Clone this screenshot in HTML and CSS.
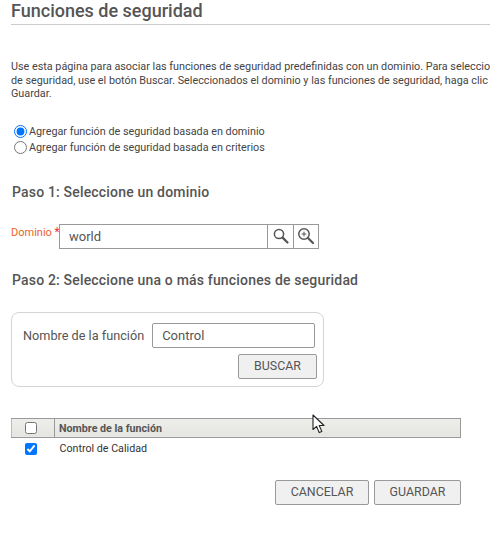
FILE: index.html
```html
<!DOCTYPE html>
<html lang="es">
<head>
  <meta charset="UTF-8" />
  <title>Funciones de seguridad</title>
  <link rel="stylesheet" href="styles.css">
</head>
<body>
  <div class="page">
    <h1>Funciones de seguridad</h1>

    <p class="intro">Use esta página para asociar las funciones de seguridad predefinidas con un dominio. Para seleccionar las funciones<br>de seguridad, use el botón Buscar. Seleccionados el dominio y las funciones de seguridad, haga clic en<br>Guardar.</p>

    <div class="radios">
      <label><input type="radio" name="tipo" checked /> Agregar función de seguridad basada en dominio</label>
      <label><input type="radio" name="tipo" /> Agregar función de seguridad basada en criterios</label>
    </div>

    <h2 class="step-one">Paso 1: Seleccione un dominio</h2>

    <div class="domain-row">
      <label class="domain-label" for="domain">Dominio <span>*</span></label>
      <input class="domain-input" type="text" id="domain" value="world" />
      <button class="icon-btn search-icon" type="button" aria-label="Buscar">
        <svg width="18" height="18" viewBox="0 0 18 18"><circle cx="7" cy="7" r="4.6" fill="none" stroke="#555" stroke-width="1.5"/><path d="M10.6 10.6 L15.5 15.5" stroke="#555" stroke-width="2.2" stroke-linecap="round"/></svg>
      </button>
      <button class="icon-btn" type="button" aria-label="Búsqueda avanzada">
        <svg width="18" height="18" viewBox="0 0 18 18"><circle cx="7" cy="7" r="5.2" fill="none" stroke="#555" stroke-width="1.5"/><path d="M4.6 7 H9.4 M7 4.6 V9.4" stroke="#555" stroke-width="1"/><path d="M11 11 L16 16" stroke="#555" stroke-width="2.2" stroke-linecap="round"/></svg>
      </button>
    </div>

    <h2 class="step-two">Paso 2: Seleccione una o más funciones de seguridad</h2>

    <form class="search-box">
      <div class="search-field">
        <label for="role">Nombre de la función</label>
        <input type="text" id="role" value="Control" />
      </div>
      <button class="btn search-btn" type="button">BUSCAR</button>
    </form>

    <table class="roles">
      <thead>
        <tr>
          <th class="check-col"><input type="checkbox" /></th>
          <th>Nombre de la función</th>
        </tr>
      </thead>
      <tbody>
        <tr>
          <td class="check-col"><input type="checkbox" checked /></td>
          <td>Control de Calidad</td>
        </tr>
      </tbody>
    </table>

    <div class="actions">
      <button class="btn cancel-btn" type="button">CANCELAR</button>
      <button class="btn save-btn" type="button">GUARDAR</button>
    </div>
  </div>

  <svg class="cursor" width="14" height="21" viewBox="0 0 14 21"><path d="M1 1 V15.5 L4.6 12.4 L7.2 18.6 L9.8 17.4 L7.2 11.5 L12 11.5 Z" fill="#fff" stroke="#222" stroke-width="1.1" stroke-linejoin="round"/></svg>
</body>
</html>
```

FILE: styles.css
```css
html, body {
  margin: 0;
  padding: 0;
  height: 541px;
  overflow: hidden;
  background: white;
}

body {
  font-family: Roboto, sans-serif;
  color: #555;
  position: relative;
}

.page {
  width: 479px;
  padding: 0 0 0 11px;
  overflow: hidden;
}

h1 {
  margin: 0;
  height: 24px;
  font-size: 18px;
  line-height: 21px;
  font-weight: 500;
  color: #555;
  border-bottom: 1px solid #ccc;
}

.intro {
  margin: 35px 0 0;
  font-size: 10.8px;
  line-height: 13.5px;
  white-space: nowrap;
  overflow: hidden;
  color: #444;
}

.radios {
  margin: 24px 0 0 3px;
  display: flex;
  flex-direction: column;
  gap: 3px;
  font-size: 10.8px;
  color: #444;
}

.radios label {
  display: flex;
  align-items: center;
  gap: 2px;
  height: 13px;
}

.radios input {
  margin: 0;
  width: 13px;
  height: 13px;
}

h2 {
  margin: 0 0 0 1px;
  font-size: 14px;
  line-height: 16px;
  font-weight: 500;
  letter-spacing: 0.18px;
  color: #555;
}

.step-one {
  margin-top: 30px;
}

.domain-row {
  margin-top: 24px;
  display: flex;
  align-items: center;
}

.domain-label {
  width: 48px;
  font-size: 11px;
  white-space: nowrap;
  color: #e8642c;
  position: relative;
  top: -4px;
}

.domain-label span {
  color: #e33;
  font-size: 12px;
}

.domain-input {
  width: 209px;
  height: 25px;
  box-sizing: border-box;
  border: 1px solid #999;
  padding: 0 9px;
  font: 13px Roboto, sans-serif;
  color: #555;
  outline: none;
}

.icon-btn {
  width: 26px;
  height: 25px;
  box-sizing: border-box;
  padding: 0;
  margin-left: -1px;
  border: 1px solid #999;
  background: white;
  display: flex;
  align-items: center;
  justify-content: center;
}

.search-icon {
  width: 27px;
}

.step-two {
  margin-top: 23px;
}

.search-box {
  margin-top: 24px;
  width: 313px;
  height: 75px;
  box-sizing: border-box;
  border: 1px solid #d4d4d4;
  border-radius: 8px;
  padding: 10px 6px 0 11px;
  display: flex;
  flex-direction: column;
  align-items: flex-end;
  gap: 6px;
}

.search-field {
  display: flex;
  align-items: center;
  width: 100%;
  gap: 8px;
  font-size: 12.7px;
}

.search-field label {
  white-space: nowrap;
}

.search-field input {
  width: 163px;
  height: 25px;
  box-sizing: border-box;
  border: 1px solid #999;
  border-radius: 2px;
  padding: 0 9px;
  font: 13px Roboto, sans-serif;
  color: #555;
  outline: none;
}

.btn {
  height: 25px;
  box-sizing: border-box;
  background: #f0f0f0;
  border: 1px solid #999;
  border-radius: 2px;
  font: 12.4px Roboto, sans-serif;
  color: #555;
  padding: 0 0 2px;
}

.search-btn {
  width: 79px;
}

.roles {
  margin-top: 31px;
  width: 450px;
  border-collapse: collapse;
  font-size: 10.7px;
}

.roles th {
  height: 19px;
  padding: 1px 0 0 4px;
  box-sizing: border-box;
  background: linear-gradient(#eeeeea, #e4e4e0);
  border: 1px solid #999;
  border-left: 1px solid #bbb;
  text-align: left;
  font-weight: 700;
  color: #555;
}

.roles td {
  height: 22px;
  padding: 0 0 0 5px;
  color: #333;
}

.roles .check-col {
  width: 43px;
  padding: 0 0 0 13px;
  box-sizing: border-box;
  text-align: left;
}

.roles input {
  margin: 0;
  width: 12px;
  height: 12px;
  vertical-align: middle;
}

.actions {
  margin-top: 20px;
  width: 450px;
  display: flex;
  justify-content: flex-end;
  gap: 5px;
}

.cancel-btn {
  width: 94px;
}

.save-btn {
  width: 87px;
}

.cursor {
  position: absolute;
  left: 312px;
  top: 414px;
}
```
